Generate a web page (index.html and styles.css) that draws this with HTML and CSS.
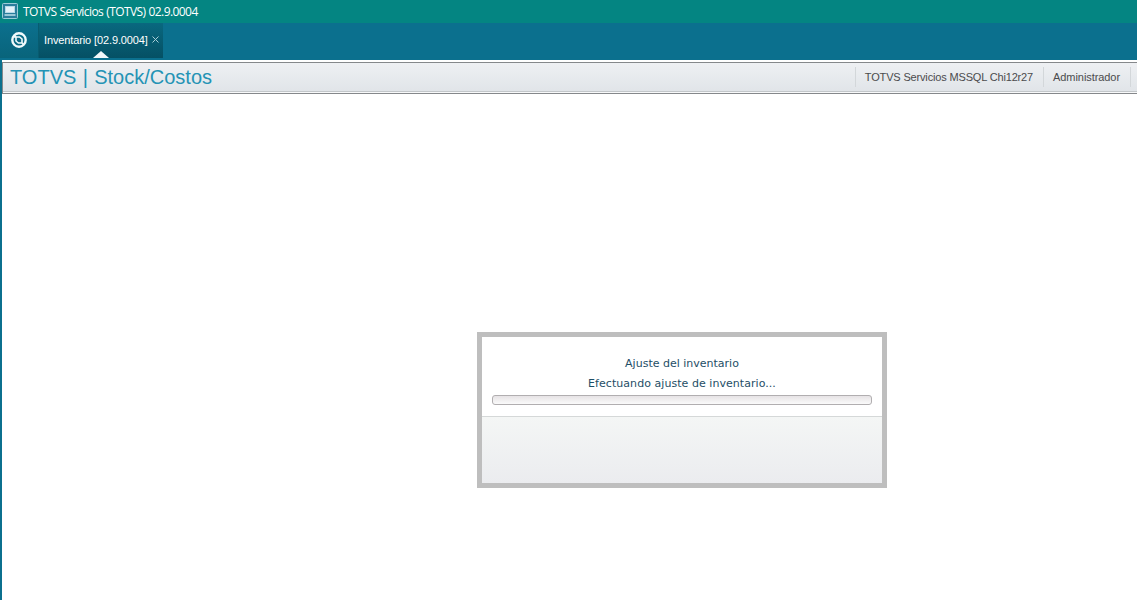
FILE: index.html
```html
<!DOCTYPE html>
<html lang="es">
  <head>
    <meta charset="UTF-8" />
    <meta name="viewport" content="width=device-width, initial-scale=1.0" />
    <title>TOTVS Servicios (TOTVS) 02.9.0004</title>
    <link rel="stylesheet" href="styles.css">
  </head>
  <body>
    <div class="titlebar">
      <svg class="app-icon" width="16" height="16" viewBox="0 0 16 16">
        <rect x="0.5" y="0.5" width="15" height="15" rx="1" fill="#2b7d9c" stroke="#9ccbd8" />
        <rect x="3.5" y="3.5" width="9" height="6" fill="#e4f1f9" stroke="#b5d9e8" />
        <path d="M2.5 12h11" stroke="#b5dae6" stroke-width="1.6" />
      </svg>
      <span class="title">TOTVS Servicios (TOTVS) 02.9.0004</span>
    </div>

    <div class="tabbar">
      <div class="home">
        <svg width="16" height="16" viewBox="0 0 16 16">
          <circle cx="8" cy="8" r="6.7" fill="none" stroke="#f1fafc" stroke-width="2.4" />
          <path d="M3 5H8.6L11 7V11H7.4L5 9V5L3 3M11 11l2 2" fill="none" stroke="#f1fafc" stroke-width="1.6" />
        </svg>
      </div>
      <div class="tab">
        <span class="tab-name">Inventario [02.9.0004]</span>
        <svg class="close" width="7" height="7" viewBox="0 0 7 7">
          <path d="M0.5 0.5l6 6M6.5 0.5l-6 6" stroke="#a9cdd6" stroke-width="1" />
        </svg>
      </div>
    </div>

    <div class="content">
      <div class="header">
        <h1>TOTVS | Stock/Costos</h1>
        <div class="info">
          <span class="company">TOTVS Servicios MSSQL Chi12r27</span>
          <span class="user">Administrador</span>
        </div>
      </div>

      <div class="workspace">
        <div class="dialog">
          <div class="dialog-body">
            <p class="dialog-title">Ajuste del inventario</p>
            <p class="dialog-status">Efectuando ajuste de inventario...</p>
            <div class="progress"></div>
          </div>
          <div class="dialog-footer"></div>
        </div>
      </div>
    </div>
  </body>
</html>
```
FILE: styles.css
```css
* {
  box-sizing: border-box;
}

body {
  margin: 0;
  height: 100vh;
  overflow: hidden;
  display: flex;
  flex-direction: column;
  background-color: #fff;
  font-family: "Liberation Sans", Arial, sans-serif;
  white-space: nowrap;
}

.titlebar {
  height: 23px;
  flex: none;
  display: flex;
  align-items: center;
  padding-left: 2px;
  background-color: #048582;
  color: #fff;
}

.app-icon {
  margin-bottom: 1px;
}

.title {
  margin-left: 5px;
  font-family: "Open Sans", "Noto Sans", sans-serif;
  font-size: 12px;
  line-height: 22px;
  letter-spacing: -0.58px;
  word-spacing: 0.5px;
}

.tabbar {
  height: 37px;
  flex: none;
  display: flex;
  padding-bottom: 2px;
  background-color: #0b708e;
}

.home {
  width: 39px;
  padding: 9px 0 0 11px;
  background: linear-gradient(#0b708e, #09647b);
  border-right: 1px solid #085c70;
}

.tab {
  position: relative;
  width: 124px;
  display: flex;
  align-items: flex-start;
  padding: 11px 0 0 5px;
  background: linear-gradient(#09687f, #055064);
  color: #fff;
  font-size: 11px;
  line-height: 13px;
}

.tab::after {
  content: "";
  position: absolute;
  left: 54px;
  bottom: 0;
  border: 8px solid transparent;
  border-top: 0;
  border-bottom: 7px solid #f3f8fa;
}

.tab-name {
  letter-spacing: -0.12px;
}

.close {
  margin: 2px 0 0 4px;
}

.content {
  flex: 1;
  display: flex;
  flex-direction: column;
  padding-top: 2px;
  border-left: 2px solid #0b708e;
}

.header {
  height: 32px;
  flex: none;
  display: flex;
  justify-content: space-between;
  align-items: center;
  padding: 0 6px 2px 7px;
  border: 1px solid #85888b;
  border-right: 0;
  background: linear-gradient(#eef0f3, #e0e4e8);
  box-shadow: inset 0 -1px #f8f9fa, inset 0 -2px #c3c7ca;
}

.header h1 {
  margin: 0;
  color: #2493b5;
  font-size: 20px;
  font-weight: normal;
  line-height: 24px;
  word-spacing: 0.8px;
}

.info {
  display: flex;
  color: #4b4b4d;
  font-size: 11px;
  line-height: 20px;
}

.company,
.user {
  padding: 0 10px 0 9px;
  border-left: 1px solid #d3d7da;
}

.company {
  letter-spacing: -0.16px;
}

.user {
  border-right: 1px solid #d3d7da;
  letter-spacing: -0.07px;
}

.workspace {
  flex: 1;
  padding: 238px 0 0 475px;
}

.dialog {
  width: 410px;
  height: 156px;
  display: flex;
  flex-direction: column;
  border: 5px solid #bebebe;
  background-color: #fff;
}

.dialog-body {
  height: 79px;
  padding: 17px 10px 0;
  text-align: center;
  color: #1e4e66;
  font-family: "DejaVu Sans", Verdana, sans-serif;
  font-size: 11px;
  line-height: 20px;
}

.dialog-body p {
  margin: 0;
}

.dialog-status {
  letter-spacing: 0.05px;
}

.progress {
  height: 10px;
  margin-top: 1px;
  border: 1px solid #b1aeb0;
  border-radius: 3px;
  background: linear-gradient(#e6e3e5, #fafafa);
}

.dialog-footer {
  flex: 1;
  border-top: 1px solid #d5d8d8;
  background: linear-gradient(#f4f6f5, #ebecef);
}
```
